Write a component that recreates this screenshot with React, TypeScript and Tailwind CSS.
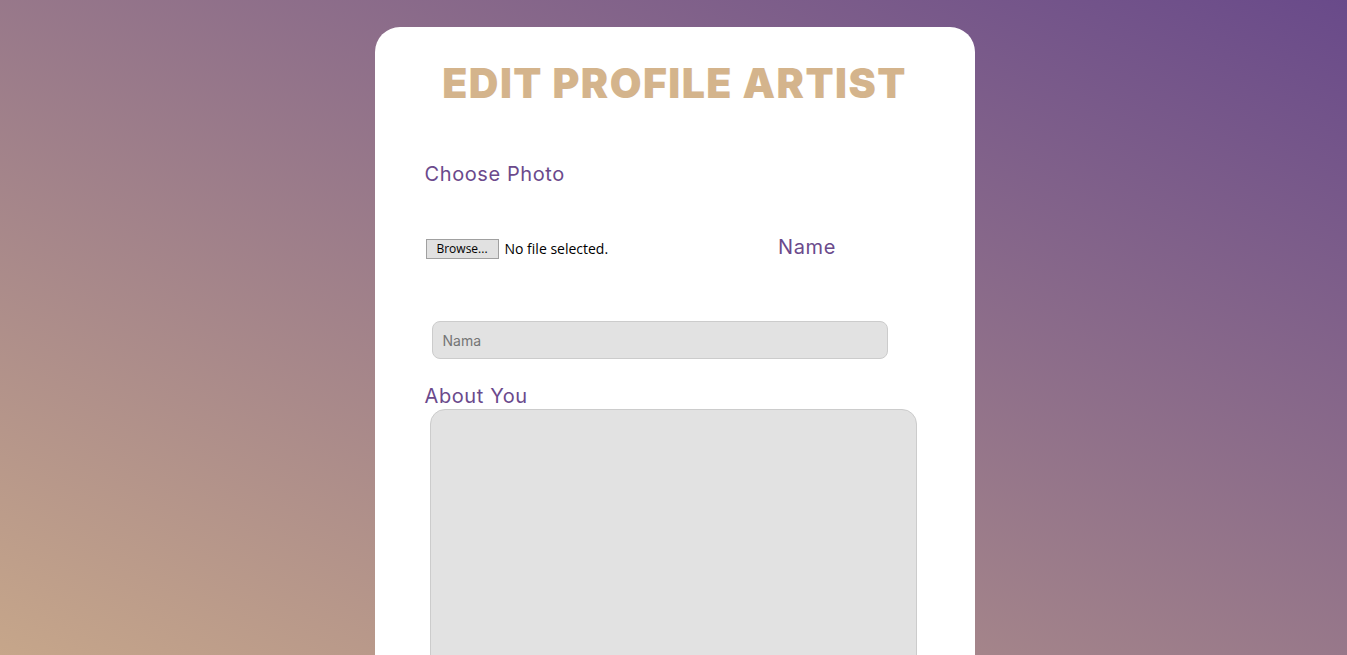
import React from "react";

const label = "block text-[20px] leading-[24px] tracking-[0.6px] text-[#6b4a8c] font-['Inter','Open_Sans',sans-serif]";

export default function App() {
  return (
    <div className="h-screen overflow-hidden bg-[linear-gradient(to_top_right,#c6a68a,#694a8a)] pt-[27px] pl-[2px] font-['Inter',sans-serif]">
      <div className="mx-auto w-[600px] h-[700px] rounded-[25px] bg-white px-[50px]">
        <h1 className="pt-[32px] text-center text-[41px] leading-[48px] font-black tracking-[1.45px] text-[#d4b48c]">
          EDIT PROFILE ARTIST
        </h1>

        <label className={`${label} mt-[55px]`}>Choose Photo</label>

        <div className="mt-[52px] flex items-center">
          <span className="ml-[1px] flex h-[20px] w-[73px] items-center justify-center border border-[#a0a0a0] bg-[#e1e1e1] text-[12px] text-black font-['Open_Sans',sans-serif]">
            Browse...
          </span>
          <span className="ml-[6px] text-[14px] text-black font-['Open_Sans',sans-serif]">No file selected.</span>
          <span className={`${label} ml-[170px] -mt-[4px]`}>Name</span>
        </div>

        <input
          type="text"
          placeholder="Nama"
          className="mt-[62px] ml-[7px] block h-[38px] w-[456px] rounded-[8px] border border-[#cccccc] bg-[#e2e2e2] px-[10px] text-[14px] placeholder:text-[#757575] outline-none"
        />

        <label className={`${label} mt-[25px]`}>About You</label>
        <textarea className="mt-[1px] ml-[5px] block h-[300px] w-[487px] resize-none rounded-[15px] border border-[#cccccc] bg-[#e2e2e2] outline-none" />
      </div>
    </div>
  );
}
